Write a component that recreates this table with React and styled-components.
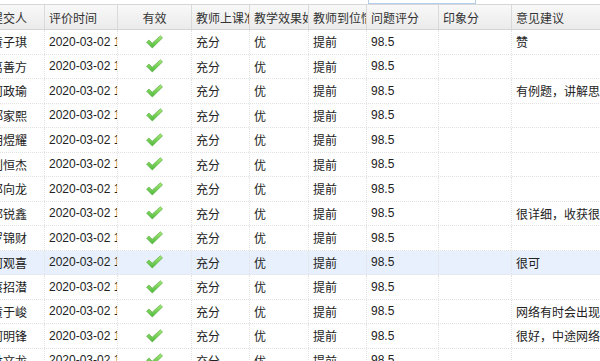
import styled, { createGlobalStyle } from 'styled-components';

const GlobalStyle = createGlobalStyle`
  html, body {
    margin: 0;
    padding: 0;
    background: #fff;
  }
  body {
    font-family: "Liberation Sans", "Noto Sans CJK SC", sans-serif;
    font-size: 12px;
    color: #222;
    overflow: hidden;
  }
`;

const COLS = '58px 73px 74px 58px 59px 58px 72px 73px 140px';

const Page = styled.div`
  width: 600px;
  height: 361px;
  overflow: hidden;
  background: #fff;
`;

const Toolbar = styled.div`
  height: 4px;
  display: flex;
  border-bottom: 1px solid #d6d6d6;
`;

const SearchEdge = styled.div`
  margin-left: 368px;
  width: 106px;
  height: 3px;
  border: 1px solid #b3cdea;
  border-top: none;
`;

const Grid = styled.div`
  margin-left: -13px;
  width: 700px;
`;

const Row = styled.div`
  display: grid;
  grid-template-columns: ${COLS};
  height: ${({ $head }) => ($head ? '25px' : '24.5px')};
  background: ${({ $head, $selected }) =>
    $head
      ? 'linear-gradient(#f8f8f8, #ebebeb)'
      : $selected
      ? '#e7f0fc'
      : '#fff'};
  border-bottom: 1px ${({ $head }) => ($head ? 'solid #d4d4d4' : 'dotted #e2e2e2')};
  box-sizing: border-box;
`;

const Cell = styled.div`
  display: flex;
  align-items: center;
  justify-content: ${({ $center }) => ($center ? 'center' : 'flex-start')};
  padding: 0 4px;
  overflow: hidden;
  white-space: nowrap;
  box-sizing: border-box;
  border-right: 1px ${({ $head }) => ($head ? 'solid #dadada' : 'dotted #e2e2e2')};
  color: ${({ $head }) => ($head ? '#333' : '#222')};
`;

const Check = () => (
  <svg width="17" height="14" viewBox="0 0 17 14">
    <defs>
      <linearGradient id="ck" x1="0" y1="0" x2="0" y2="1">
        <stop offset="0" stopColor="#a8ea78" />
        <stop offset="1" stopColor="#4cb83a" />
      </linearGradient>
    </defs>
    <path
      d="M0.6 7.2 L2.9 5.1 L6.2 8.2 L14.4 0.8 L16.5 2.9 L6.3 13 Z"
      fill="url(#ck)"
      stroke="#5aae44"
      strokeWidth="0.7"
      strokeLinejoin="round"
    />
  </svg>
);

const headers = ['提交人', '评价时间', '有效', '教师上课准备', '教学效果如何', '教师到位情况', '问题评分', '印象分', '意见建议'];

const rows = [
  ['黄子琪', '赞'],
  ['葛善方', ''],
  ['何政瑜', '有例题，讲解思路清晰'],
  ['郑家熙', ''],
  ['胡煜耀', ''],
  ['刘恒杰', ''],
  ['邓向龙', ''],
  ['郭锐鑫', '很详细，收获很大'],
  ['罗锦财', ''],
  ['何观喜', '很可'],
  ['蔡招潜', ''],
  ['黄于峻', '网络有时会出现卡顿'],
  ['何明锋', '很好，中途网络不稳'],
  ['林文龙', ''],
];

export default function App() {
  return (
    <Page>
      <GlobalStyle />
      <Toolbar>
        <SearchEdge />
      </Toolbar>
      <Grid>
        <Row $head>
          {headers.map((h, i) => (
            <Cell key={h} $head $center={i === 2}>
              {h}
            </Cell>
          ))}
        </Row>
        {rows.map(([name, note], i) => (
          <Row key={name} $selected={i === 9}>
            <Cell>{name}</Cell>
            <Cell>2020-03-02 10:21</Cell>
            <Cell $center>
              <Check />
            </Cell>
            <Cell>充分</Cell>
            <Cell>优</Cell>
            <Cell>提前</Cell>
            <Cell>98.5</Cell>
            <Cell></Cell>
            <Cell>{note}</Cell>
          </Row>
        ))}
      </Grid>
    </Page>
  );
}
